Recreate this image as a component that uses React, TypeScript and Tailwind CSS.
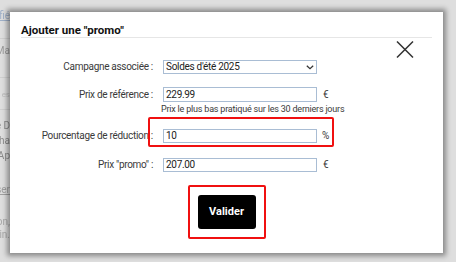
import React from "react";

function Chevron() {
  return (
    <svg width="8" height="5" viewBox="0 0 8 5" className="shrink-0">
      <path d="M0.8 0.8 L4 3.8 L7.2 0.8" fill="none" stroke="#333" strokeWidth="1.2" />
    </svg>
  );
}

function CloseX() {
  return (
    <svg width="18" height="17" viewBox="0 0 18 17">
      <path d="M1 0.5 L17 16.5 M17 0.5 L1 16.5" stroke="#333" strokeWidth="1.5" fill="none" />
    </svg>
  );
}

function BgLine({ text, cls }: { text: string; cls: string }) {
  return (
    <div className={"flex justify-end overflow-hidden whitespace-nowrap w-[10px] " + cls}>
      <span className="shrink-0">{text}</span>
    </div>
  );
}

export default function App() {
  return (
    <div
      className="relative w-[456px] h-[262px] overflow-hidden bg-[#dedede] text-[#333]"
      style={{ fontFamily: "Roboto, 'Liberation Sans', sans-serif" }}
    >
      {/* blurred page behind */}
      <div className="flex flex-col w-[12px] text-[10px] leading-[12px] blur-[0.6px] text-[#9a9a9a]">
        <BgLine text="Modifié" cls="mt-[10px] text-[#9fb0c8] underline" />
        <div className="h-px w-[12px] bg-[#cfcfcf] mt-[16px]" />
        <BgLine text="Ma" cls="mt-[6px]" />
        <div className="h-px w-[12px] bg-[#cfcfcf] mt-[20px]" />
        <BgLine text="es" cls="mt-[11px] text-[8px] text-[#bdbdbd]" />
        <div className="h-px w-[12px] bg-[#cfcfcf] mt-[8px]" />
        <BgLine text="de D" cls="mt-[10px] text-[#8a8a8a]" />
        <BgLine text="cha" cls="mt-[3px] text-[#8a8a8a]" />
        <BgLine text="l'Ap" cls="mt-[3px] text-[#8a8a8a]" />
        <BgLine text="osser" cls="mt-[22px] underline text-[#a0a0a0]" />
        <BgLine text="ion," cls="mt-[20px] text-[#a8a8a8]" />
        <BgLine text="rdin." cls="mt-[1px] text-[#a8a8a8]" />
      </div>

      {/* modal */}
      <div className="absolute left-[10px] top-[12px] w-[433px] h-[241px] bg-white shadow-[0_0_5px_3px_rgba(0,0,0,0.38)] px-[11px]">
        <div className="pt-[12px] h-[26px] border-b border-[#e6e6e6] text-[11.5px] leading-[13px] font-bold text-[#111] tracking-[0px]">
          Ajouter une "promo"
        </div>

        <div className="absolute right-[29px] top-[29px]">
          <CloseX />
        </div>

        <div className="flex flex-col text-[10px] tracking-[-0.3px] text-[#3a3a3a]">
          {/* Campagne */}
          <div className="flex items-center mt-[22px] h-[14px]">
            <div className="w-[132px] text-right leading-[12px]">Campagne associée :</div>
            <div className="ml-[10px] w-[154px] h-[14px] border border-[#a9bdd4] flex items-center justify-between pl-[2px] pr-[2px] leading-[12px] text-[#222]">
              <span>Soldes d'été 2025</span>
              <Chevron />
            </div>
          </div>

          {/* Prix ref */}
          <div className="flex items-center mt-[13px] h-[15px]">
            <div className="w-[132px] text-right leading-[12px]">Prix de référence :</div>
            <div className="ml-[10px] w-[154px] h-[15px] border border-[#a9bdd4] flex items-center pl-[2px] leading-[12px] text-[#222]">
              229.99
            </div>
            <div className="ml-[6px] leading-[12px]">€</div>
          </div>
          <div className="flex mt-[2px]">
            <div className="ml-[140px] text-[9px] leading-[11px] tracking-[-0.2px] whitespace-nowrap">
              Prix le plus bas pratiqué sur les 30 derniers jours
            </div>
          </div>

          {/* Pourcentage */}
          <div className="flex items-center mt-[14px] h-[14px]">
            <div className="w-[132px] text-right leading-[12px] whitespace-nowrap">Pourcentage de réduction :</div>
            <div className="ml-[10px] w-[154px] h-[14px] border border-[#a9bdd4] flex items-center pl-[2px] leading-[12px] text-[#222]">
              10
            </div>
            <div className="ml-[5px] leading-[12px]">%</div>
          </div>

          {/* Prix promo */}
          <div className="flex items-center mt-[15px] h-[14px]">
            <div className="w-[132px] text-right leading-[12px]">Prix "promo" :</div>
            <div className="ml-[10px] w-[154px] h-[14px] border border-[#a9bdd4] flex items-center pl-[2px] leading-[12px] text-[#222]">
              207.00
            </div>
            <div className="ml-[6px] leading-[12px]">€</div>
          </div>

          {/* Valider */}
          <div className="flex justify-center mt-[13px]">
            <div className="p-[8px] border-2 border-[#f01010] rounded-[2px]">
              <button className="w-[58px] h-[34px] bg-black text-white rounded-[3px] text-[11px] font-bold tracking-[0px] flex items-center justify-center">
                Valider
              </button>
            </div>
          </div>
        </div>

        {/* annotation box around percentage row */}
        <div className="absolute left-[138px] top-[105px] w-[186px] h-[30px] border-2 border-[#f01010] rounded-[2px] pointer-events-none" />
      </div>
    </div>
  );
}
